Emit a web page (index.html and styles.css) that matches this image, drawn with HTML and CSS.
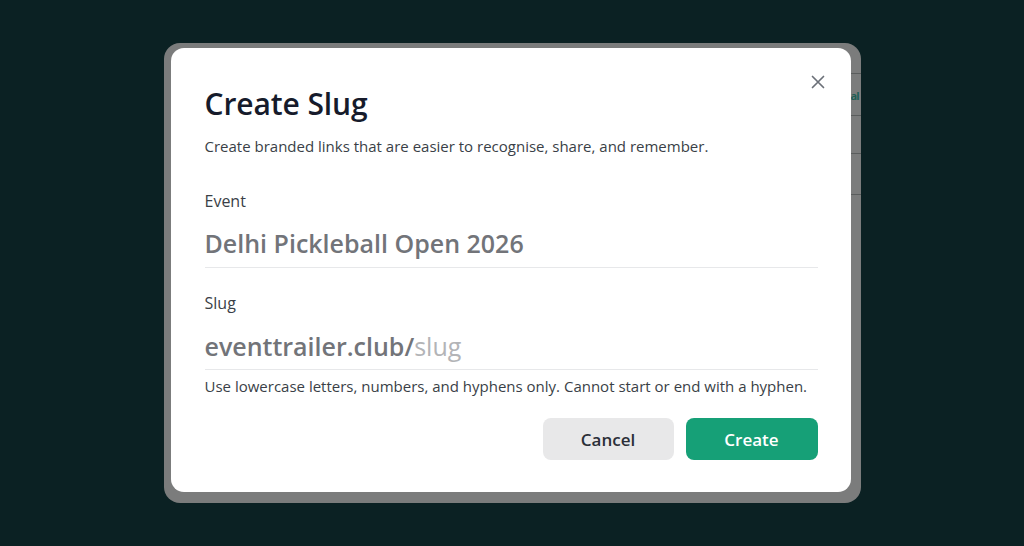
FILE: index.html
```html
<!DOCTYPE html>
<html lang="en">
<head>
<meta charset="utf-8">
<title>Create Slug</title>
<link rel="stylesheet" href="styles.css">
</head>
<body>
<div class="stage">
  <div class="frame">
    <span class="bg-line l1"></span>
    <span class="bg-line l2"></span>
    <span class="bg-line l3"></span>
    <span class="bg-line l4"></span>
    <span class="bg-text">al</span>
    <div class="card">
      <button class="close" aria-label="Close">
        <svg width="14" height="14" viewBox="0 0 14 14"><path d="M1.5 1.5 L12.5 12.5 M12.5 1.5 L1.5 12.5" stroke="#6b7078" stroke-width="1.7" stroke-linecap="round" fill="none"/></svg>
      </button>
      <h1 class="title">Create Slug</h1>
      <p class="subtitle">Create branded links that are easier to recognise, share, and remember.</p>
      <div class="field">
        <div class="label">Event</div>
        <div class="value">Delhi Pickleball Open 2026</div>
      </div>
      <div class="field field-slug">
        <div class="label">Slug</div>
        <div class="value">eventtrailer.club/<span class="placeholder">slug</span></div>
      </div>
      <p class="help">Use lowercase letters, numbers, and hyphens only. Cannot start or end with a hyphen.</p>
      <div class="actions">
        <button class="btn btn-cancel">Cancel</button>
        <button class="btn btn-create">Create</button>
      </div>
    </div>
  </div>
</div>
</body>
</html>
```
FILE: styles.css
```css
* { box-sizing: border-box; }
html, body { margin: 0; padding: 0; }
body {
  background: #0b2123;
  font-family: "Open Sans", "Noto Sans", sans-serif;
  width: 1024px;
  height: 546px;
  overflow: hidden;
}
.stage {
  width: 1024px;
  height: 546px;
  display: flex;
  align-items: center;
  justify-content: center;
}
.frame {
  position: relative;
  background: #7b7c7c;
  border-radius: 16px;
  padding: 5px 10px 11px 7px;
}
.bg-line {
  position: absolute;
  right: 0;
  width: 10px;
  height: 1px;
  background: #5a5d5d;
}
.l1 { top: 30px; }
.l2 { top: 72px; }
.l3 { top: 110px; }
.l4 { top: 151px; }
.bg-text {
  position: absolute;
  right: 0;
  top: 45px;
  width: 10px;
  font-size: 11px;
  font-weight: 700;
  letter-spacing: -1px;
  color: #1f5e55;
  line-height: 16px;
  white-space: nowrap;
}
.card {
  position: relative;
  width: 680px;
  height: 444px;
  background: #ffffff;
  border-radius: 13px;
  padding: 37px 33px 32px 34px;
}
.close {
  position: absolute;
  top: 27px;
  right: 26px;
  width: 14px;
  height: 14px;
  padding: 0;
  border: 0;
  background: none;
  display: flex;
}
.title {
  margin: 0;
  font-size: 30px;
  line-height: 37px;
  font-weight: 600;
  color: #161b2b;
  letter-spacing: -0.1px;
}
.subtitle {
  margin: 14px 0 0;
  font-size: 15px;
  line-height: 20px;
  color: #3a3f47;
}
.field {
  margin-top: 34px;
  border-bottom: 1px solid #e7e8ea;
  padding-bottom: 8px;
}
.field-slug {
  margin-top: 24px;
  padding-bottom: 7px;
}
.label {
  font-size: 16px;
  line-height: 22px;
  color: #3a3f47;
}
.value {
  margin-top: 15px;
  font-size: 25px;
  line-height: 32px;
  font-weight: 600;
  color: #727479;
}
.field-slug .value { margin-top: 16px; }
.placeholder {
  font-weight: 400;
  color: #b3b4b7;
}
.help {
  margin: 6px 0 0;
  font-size: 15px;
  line-height: 20px;
  color: #3a3f47;
}
.actions {
  margin-top: 22px;
  display: flex;
  justify-content: flex-end;
  gap: 12px;
}
.btn {
  height: 42px;
  border: 0;
  border-radius: 8px;
  font-family: inherit;
  font-size: 17px;
  font-weight: 600;
}
.btn-cancel {
  width: 131px;
  background: #e8e8e9;
  color: #2b2f38;
}
.btn-create {
  width: 132px;
  background: #16a077;
  color: #ffffff;
}
```
